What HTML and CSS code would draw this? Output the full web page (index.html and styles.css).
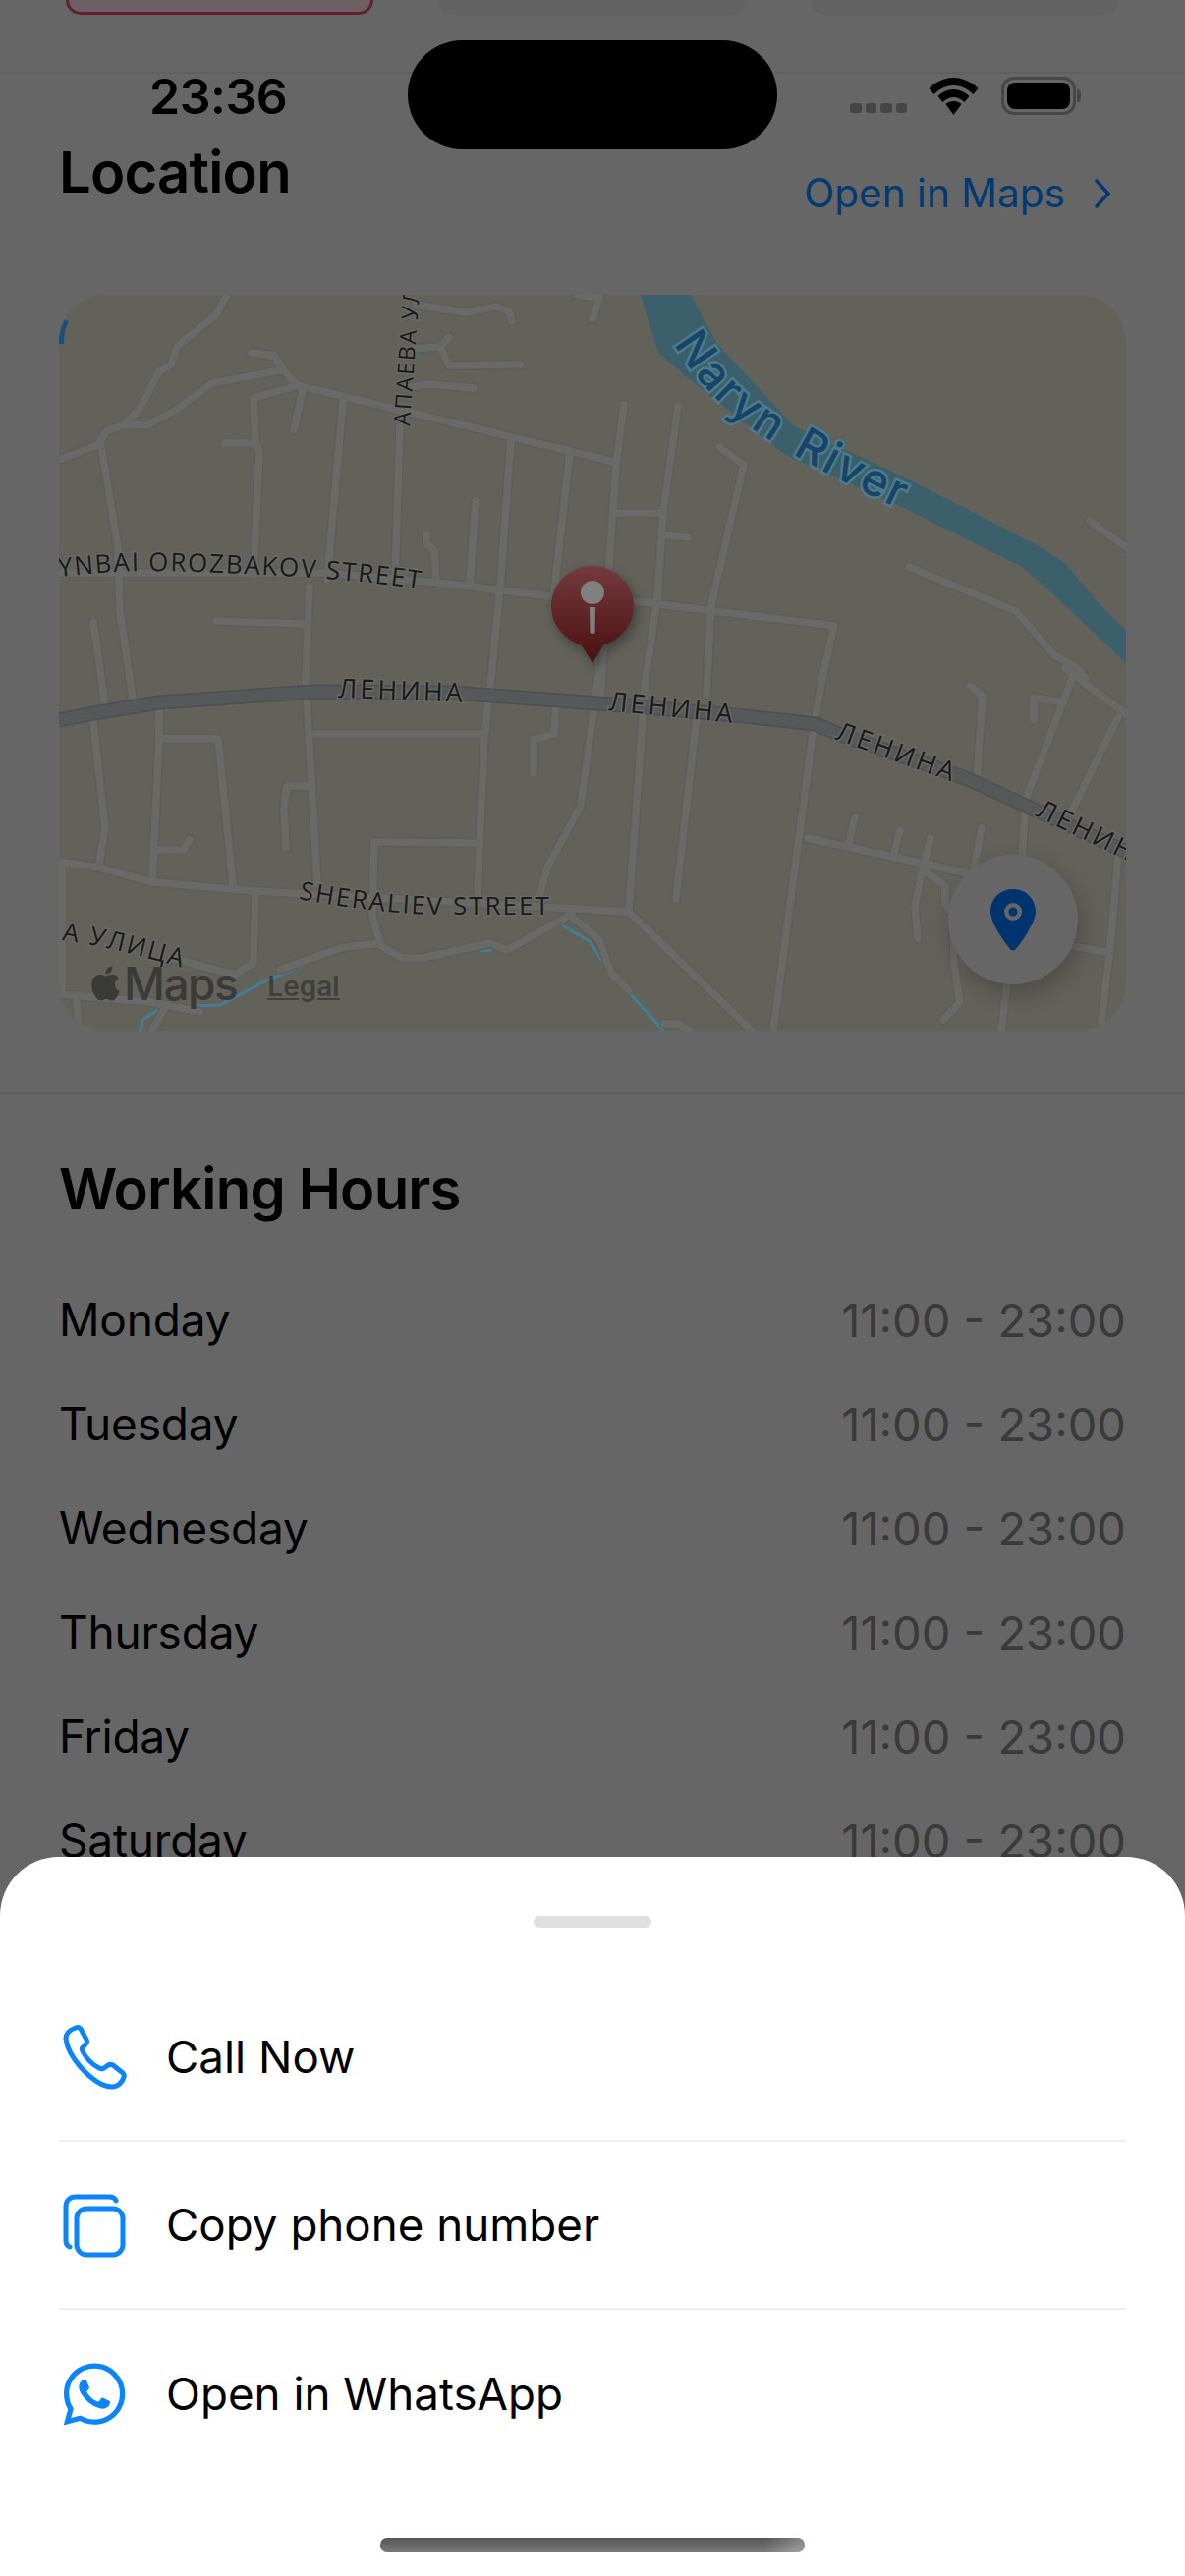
FILE: index.html
```html
<!DOCTYPE html>
<html lang="en">
<head>
<meta charset="utf-8">
<title>Location</title>
<link rel="stylesheet" href="styles.css">
</head>
<body>
<div class="screen">
  <div class="content">
    <div class="chips">
      <div class="chip chip-active"></div>
      <div class="chip"></div>
      <div class="chip"></div>
    </div>

    <section class="location">
      <div class="section-head">
        <h2 class="title">Location</h2>
        <a class="open-maps">Open in Maps
          <svg class="chevron" viewBox="0 0 20 34"><path d="M3 3l13 14L3 31"/></svg>
        </a>
      </div>
      <div class="map">
        <svg class="map-art" viewBox="60 300 1086 749">
          <defs>
            <g id="roads">
              <path d="M231 300L220 320 180 353 174 372 162 378 141 418 128 430"/>
              <path d="M63 467L99 453 109 438 128 432 149 433 178 418 216 390 285 377"/>
              <path d="M256 359L279 362 289 377 302 392 625 470"/>
              <path d="M304 392L258 405 260 450 264 460 258 585"/>
              <path d="M229 451H260"/>
              <path d="M308 397L299 438"/>
              <path d="M349 408L333 590"/>
              <path d="M407 433L402 590"/>
              <path d="M520 447L509 598 501 680 493 752 488 860 486 920"/>
              <path d="M580 460L564 602"/>
              <path d="M635 412L627 473 618 603 611 715"/>
              <path d="M627 522H675"/>
              <path d="M484 510L478 595"/>
              <path d="M434 543V553L442 560 444 592"/>
              <path d="M60 583L330 583 446 593 560 607 646 612 849 637 837 690 828 740 787 1049"/>
              <path d="M103 453L120 557 122 623 132 690 135 713"/>
              <path d="M95 633L103 690 107 720"/>
              <path d="M315 597L311 690 323 900"/>
              <path d="M220 632L311 635"/>
              <path d="M423 310L474 318 505 312 518 317 521 327"/>
              <path d="M419 355L448 353 457 343M448 353L457 372 530 371"/>
              <path d="M417 394L438 391 482 395"/>
              <path d="M587 300L610 303 603 325"/>
              <path d="M690 413L675 520 669 610 657 690 640 925"/>
              <path d="M732 455L757 473 724 615 719 707"/>
              <path d="M709 730L688 915"/>
              <path d="M678 545L700 547"/>
              <path d="M925 577L1034 622 1073 667 1094 678 1105 690"/>
              <path d="M1109 530L1146 557"/>
              <path d="M987 698L1000 708 994 793"/>
              <path d="M1094 683L1044 813 1040 873"/>
              <path d="M1084 680L1146 727"/>
              <path d="M1052 733V710L1082 715"/>
              <path d="M1138 730L1092 823"/>
              <path d="M1138 870L1130 963 1120 1049"/>
              <path d="M822 853L990 890 1025 900"/>
              <path d="M870 832L864 857M916 845L910 868M947 853L940 880M999 843L990 890"/>
              <path d="M939 883L931 923 934 955"/>
              <path d="M939 885L962 902V920L970 932 971 980 977 1020 960 1038"/>
              <path d="M1092 963L1130 970"/>
              <path d="M1025 1000L1019 1049"/>
              <path d="M610 680L591 820 557 883 549 913"/>
              <path d="M566 717L564 747 543 753V787"/>
              <path d="M321 747H493"/>
              <path d="M162 717V750L155 897"/>
              <path d="M162 752H222L237 900"/>
              <path d="M160 865H187L193 855"/>
              <path d="M95 735L107 843 101 878"/>
              <path d="M317 800H292L289 823 291 863"/>
              <path d="M381 857L488 858"/>
              <path d="M381 857L379 933 388 963 409 975H430L499 960 516 967 570 937 582 930"/>
              <path d="M60 877L101 883 155 898 260 907 640 928 765 1049"/>
              <path d="M582 933L610 957 622 990 640 1008"/>
              <path d="M260 910L258 980 239 992 174 975"/>
              <path d="M285 987L346 965 386 960"/>
              <path d="M63 883V1013"/>
              <path d="M60 1012L155 1020 203 1030"/>
              <path d="M168 1025L155 1049"/>
              <path d="M78 1020L80 1049"/>
              <path d="M676 1042L690 1042 702 1049"/>
            </g>
          </defs>
          <rect class="land" x="60" y="300" width="1086" height="749"/>
          <polygon class="river" points="652,300 703,300 715,323 730,350 807,433 929,490 1059,557 1084,573 1117,613 1146,642 1146,675 1067,600 1040,577 912,513 799,463 703,387 670,359"/>
          <path class="creek" d="M143 1049L145 1038 166 1025 224 1023 273 997 308 983M488 968L501 967M572 942L600 958 619 987 640 1010 675 1049"/>
          <path class="creek-dark" d="M62 350C62 338 64 332 67 326"/>
          <use href="#roads" class="road-case"/>
          <use href="#roads" class="road-fill"/>
          <path class="main-case" d="M60 733L101 725 162 715 319 704 461 705 622 717 749 728 830 737 853 747 983 792 1048 822 1146 867"/>
          <path class="main-fill" d="M60 733L101 725 162 715 319 704 461 705 622 717 749 728 830 737 853 747 983 792 1048 822 1146 867"/>
          <path id="p-naryn" class="guide" d="M686 350C700 375 725 405 750 425S830 478 915 518"/>
          <path id="p-orozb" class="guide" d="M60 587C90 584 120 581 150 581S340 585 436 601"/>
          <path id="p-apaeva" class="guide" d="M417 434L427 296"/>
          <path id="p-len1" class="guide" d="M344 710L480 715"/>
          <path id="p-len2" class="guide" d="M619 723L755 737"/>
          <path id="p-len3" class="guide" d="M849 752L980 800"/>
          <path id="p-len4" class="guide" d="M1053 830L1180 892"/>
          <path id="p-sher" class="guide" d="M304 915C330 920 373 928 438 931L570 931"/>
          <path id="p-ul" class="guide" d="M63 957C100 962 140 972 182 984"/>
          <text class="label river-label"><textPath href="#p-naryn">Naryn River</textPath></text>
          <text class="label label-long"><textPath href="#p-orozb">YNBAI OROZBAKOV STREET</textPath></text>
          <text class="label label-small"><textPath href="#p-apaeva">АПАЕВА УЛ</textPath></text>
          <text class="label label-wide"><textPath href="#p-len1">ЛЕНИНА</textPath></text>
          <text class="label label-wide"><textPath href="#p-len2">ЛЕНИНА</textPath></text>
          <text class="label label-wide"><textPath href="#p-len3">ЛЕНИНА</textPath></text>
          <text class="label label-wide"><textPath href="#p-len4">ЛЕНИНА</textPath></text>
          <text class="label"><textPath href="#p-sher">SHERALIEV STREET</textPath></text>
          <text class="label"><textPath href="#p-ul">А УЛИЦА</textPath></text>
        </svg>

        <svg class="map-pin" viewBox="0 0 84 100">
          <defs>
            <linearGradient id="pin-grad" x1="0" y1="0" x2="0" y2="1">
              <stop offset="0" stop-color="#743a3d"/>
              <stop offset="1" stop-color="#4b0f10"/>
            </linearGradient>
          </defs>
          <path fill="url(#pin-grad)" d="M42 0C65 0 84 18 84 41C84 60 70 75 53 81L42 99L31 81C14 75 0 60 0 41C0 18 19 0 42 0Z"/>
          <circle cx="42" cy="27" r="12" fill="#808080"/>
          <path fill="#808080" d="M39 42H45L44.5 68Q42 70 39.5 68Z"/>
        </svg>

        <div class="maps-brand">
          <svg class="apple" viewBox="0 0 24 24"><path d="M12.152 6.896c-.948 0-2.415-1.078-3.96-1.04-2.04.027-3.91 1.183-4.961 3.014-2.117 3.675-.546 9.103 1.519 12.09 1.013 1.454 2.208 3.09 3.792 3.039 1.52-.065 2.09-.987 3.935-.987 1.831 0 2.35.987 3.96.948 1.637-.026 2.676-1.48 3.676-2.948 1.156-1.688 1.636-3.325 1.662-3.415-.039-.013-3.182-1.221-3.22-4.857-.026-3.04 2.48-4.494 2.597-4.559-1.429-2.09-3.623-2.324-4.39-2.376-2-.156-3.675 1.09-4.61 1.09zM15.53 3.83c.843-1.012 1.4-2.427 1.245-3.83-1.207.052-2.662.805-3.532 1.818-.78.896-1.454 2.338-1.273 3.714 1.338.104 2.715-.688 3.559-1.701"/></svg>
          <span class="maps-word">Maps</span>
          <span class="legal">Legal</span>
        </div>

        <div class="locate">
          <svg viewBox="0 0 46 63"><path fill-rule="evenodd" d="M23 0C36 0 46 10 46 23C46 33 33 53 26 61Q23 64 20 61C13 53 0 33 0 23C0 10 10 0 23 0ZM23 14A9 9 0 1 0 23 32A9 9 0 1 0 23 14Z"/><circle cx="23" cy="23" r="4.5"/></svg>
        </div>
      </div>
    </section>

    <section class="hours">
      <h2 class="title">Working Hours</h2>
      <ul class="hour-list">
        <li class="hour-row"><span>Monday</span><span class="time">11:00 - 23:00</span></li>
        <li class="hour-row"><span>Tuesday</span><span class="time">11:00 - 23:00</span></li>
        <li class="hour-row"><span>Wednesday</span><span class="time">11:00 - 23:00</span></li>
        <li class="hour-row"><span>Thursday</span><span class="time">11:00 - 23:00</span></li>
        <li class="hour-row"><span>Friday</span><span class="time">11:00 - 23:00</span></li>
        <li class="hour-row"><span>Saturday</span><span class="time">11:00 - 23:00</span></li>
      </ul>
    </section>
  </div>

  <div class="status">
    <span class="clock">23:36</span>
    <div class="island"></div>
    <div class="status-icons">
      <div class="signal"><i></i><i></i><i></i><i></i></div>
      <svg class="wifi" viewBox="0 0 50 38">
        <path d="M25 0C34 0 43 4 50 11L45 17C39 11 32 8 25 8S11 11 5 17L0 11C7 4 16 0 25 0Z"/>
        <path d="M25 12C31 12 37 15 41 19L36 25C33 22 29 20 25 20S17 22 14 25L9 19C13 15 19 12 25 12Z"/>
        <path d="M25 24C28 24 31 25 33 27L25 38 17 27C19 25 22 24 25 24Z"/>
      </svg>
      <div class="battery"><div class="battery-level"></div></div>
    </div>
  </div>

  <div class="sheet">
    <div class="handle"></div>
    <div class="actions">
      <div class="action">
        <svg class="action-icon stroke" viewBox="0 0 68 68"><path d="M15 4C9 6 5 10 5 15C6 24 12 35 20 44C29 54 41 64 52 64C58 64 63 59 64 54C65 52 64 51 63 50L53 42C51 41 50 41 48 42L44 45C42 46 41 46 39 45C32 42 25 34 22 28C21 26 21 25 22 24L25 21C27 19 27 18 26 16L20 5C18 3 17 3 15 4Z"/></svg>
        <span>Call Now</span>
      </div>
      <div class="action">
        <svg class="action-icon stroke" viewBox="0 0 68 68"><path d="M56 9C55 6 52 5 49 5H15C9 5 5 9 5 15V49C5 52 6 55 9 56"/><rect x="16" y="17" width="47" height="47" rx="10"/></svg>
        <span>Copy phone number</span>
      </div>
      <div class="action">
        <svg class="action-icon fill" viewBox="-1 -1 26 26"><path d="M17.472 14.382c-.297-.149-1.758-.867-2.03-.967-.273-.099-.471-.148-.67.15-.197.297-.767.966-.94 1.164-.173.199-.347.223-.644.075-.297-.15-1.255-.463-2.39-1.475-.883-.788-1.48-1.761-1.653-2.059-.173-.297-.018-.458.13-.606.134-.133.298-.347.446-.52.149-.174.198-.298.298-.497.099-.198.05-.371-.025-.52-.075-.149-.669-1.612-.916-2.207-.242-.579-.487-.5-.669-.51-.173-.008-.371-.01-.57-.01-.198 0-.52.074-.792.372-.272.297-1.04 1.016-1.04 2.479 0 1.462 1.065 2.875 1.213 3.074.149.198 2.096 3.2 5.077 4.487.709.306 1.262.489 1.694.625.712.227 1.36.195 1.871.118.571-.085 1.758-.719 2.006-1.413.248-.694.248-1.289.173-1.413-.074-.124-.272-.198-.57-.347m-5.421 7.403h-.004a9.87 9.87 0 01-5.031-1.378l-.361-.214-3.741.982.998-3.648-.235-.374a9.86 9.86 0 01-1.51-5.26c.001-5.45 4.436-9.884 9.888-9.884 2.64 0 5.122 1.03 6.988 2.898a9.825 9.825 0 012.893 6.994c-.003 5.45-4.437 9.884-9.885 9.884m8.413-18.297A11.815 11.815 0 0012.05 0C5.495 0 .16 5.335.157 11.892c0 2.096.547 4.142 1.588 5.945L.057 24l6.305-1.654a11.882 11.882 0 005.683 1.448h.005c6.554 0 11.89-5.335 11.893-11.893a11.821 11.821 0 00-3.48-8.413z"/></svg>
        <span>Open in WhatsApp</span>
      </div>
    </div>
    <div class="home-indicator"></div>
  </div>
</div>
</body>
</html>
```
FILE: styles.css
```css
* { box-sizing: border-box; }
html, body { margin: 0; padding: 0; }
body { font-family: Inter, "Liberation Sans", sans-serif; color: #000; }

.screen {
  position: relative;
  width: 1206px;
  height: 2622px;
  overflow: hidden;
  background: #666;
}

/* Dimmed page content */
.chips {
  display: flex;
  height: 75px;
  padding: 0 68px 0 67px;
  justify-content: space-between;
  border-bottom: 2px solid #606060;
}
.chip {
  width: 313px;
  height: 15px;
  border-radius: 0 0 24px 24px;
  background: #626262;
}
.chip-active {
  background: #6c6064;
  border: 3px solid #641f2b;
  border-top: 0;
}

.location { padding: 0 60px; }
.section-head {
  display: flex;
  justify-content: space-between;
  align-items: flex-start;
  height: 225px;
  padding-top: 68px;
}
.title {
  margin: 0;
  font-size: 58px;
  line-height: 64px;
  font-weight: 600;
  letter-spacing: -.8px;
  color: #000;
}
.open-maps {
  display: flex;
  align-items: center;
  gap: 28px;
  margin: 29px 14px 0 0;
  font-size: 40.6px;
  line-height: 50px;
  color: #003a74;
}
.chevron {
  width: 20px;
  height: 34px;
  fill: none;
  stroke: #003a74;
  stroke-width: 3.5;
}

.map {
  position: relative;
  width: 1086px;
  height: 749px;
  border-radius: 48px;
  overflow: hidden;
}
.map-art { display: block; width: 1086px; height: 749px; }
.land { fill: #62615a; }
.river { fill: #3c5f6c; }
.creek { fill: none; stroke: #427f94; stroke-width: 3; }
.creek-dark { fill: none; stroke: #1d4f78; stroke-width: 6; }
.road-case, .road-fill { fill: none; stroke-linecap: round; stroke-linejoin: round; }
.road-case { stroke: #5d5d59; stroke-width: 10; }
.road-fill { stroke: #696967; stroke-width: 7.5; }
.main-case, .main-fill { fill: none; stroke-linejoin: round; }
.main-case { stroke: #4e4f50; stroke-width: 15; }
.main-fill { stroke: #57585a; stroke-width: 12; }
.guide { fill: none; stroke: none; }
.label {
  font-family: "Open Sans", Inter, sans-serif;
  font-size: 26px;
  font-weight: 500;
  letter-spacing: 2px;
  fill: #1a1a1a;
  stroke: #696965;
  stroke-width: 3px;
  paint-order: stroke;
}
.label-long { letter-spacing: 1.7px; }
.label-small { font-size: 23px; letter-spacing: 2px; font-weight: 400; }
.label-wide { letter-spacing: 3px; font-size: 27px; }
.river-label {
  font-family: Inter, sans-serif;
  font-size: 46px;
  letter-spacing: 2.5px;
  word-spacing: 6px;
  fill: #174468;
  stroke: #4c7b8a;
  stroke-width: 5px;
}

.map-pin {
  position: absolute;
  left: 501px;
  top: 276px;
  width: 84px;
  height: 100px;
  filter: drop-shadow(3px 5px 6px rgba(0, 0, 0, .35));
}
.maps-brand {
  position: absolute;
  left: 30px;
  top: 676px;
  display: flex;
  align-items: baseline;
  color: #3a3a38;
}
.apple { width: 35px; height: 36px; fill: #3a3a38; align-self: center; margin-right: 1px; }
.maps-word { font-size: 46px; line-height: 50px; font-weight: 500; letter-spacing: -1.5px; }
.legal {
  align-self: flex-start;
  margin: 11px 0 0 31px;
  font-size: 28px;
  font-weight: 600;
  text-decoration: underline;
  color: #403f3c;
}
.locate {
  position: absolute;
  left: 905px;
  top: 570px;
  width: 132px;
  height: 132px;
  border-radius: 50%;
  background: #666;
  box-shadow: 4px 10px 24px rgba(0, 0, 0, .22);
  display: flex;
  align-items: center;
  justify-content: center;
}
.locate svg { width: 46px; height: 63px; fill: #00346f; }

.hours {
  margin-top: 63px;
  padding: 64px 60px 0;
  border-top: 2px solid #5f5f5f;
}
.hour-list { list-style: none; margin: 48px 0 0; padding: 0; }
.hour-row {
  display: flex;
  justify-content: space-between;
  align-items: center;
  height: 106px;
  font-size: 46px;
  letter-spacing: -.2px;
  color: #000;
}
.time { color: #3a3a3a; font-size: 47px; letter-spacing: 0; }

/* Status bar */
.status {
  position: absolute;
  left: 0;
  top: 0;
  width: 100%;
  height: 160px;
  pointer-events: none;
}
.clock {
  position: absolute;
  left: 152px;
  top: 68px;
  font-size: 50px;
  line-height: 60px;
  font-weight: 600;
  letter-spacing: -.5px;
}
.island {
  position: absolute;
  left: 415px;
  top: 41px;
  width: 376px;
  height: 111px;
  border-radius: 56px;
  background: #000;
}
.status-icons {
  position: absolute;
  left: 865px;
  top: 78px;
  display: flex;
  align-items: flex-end;
}
.signal { display: flex; gap: 4px; margin: 0 22px 2px 0; }
.signal i { display: block; width: 11.5px; height: 10px; border-radius: 3px; background: #454545; }
.wifi { width: 51px; height: 38px; fill: #000; margin-right: 23px; }
.battery {
  position: relative;
  width: 76px;
  height: 39px;
  border: 3px solid #474747;
  border-radius: 13px;
  padding: 3px;
}
.battery::after {
  content: "";
  position: absolute;
  right: -8px;
  top: 10px;
  width: 4px;
  height: 13px;
  border-radius: 0 4px 4px 0;
  background: #474747;
}
.battery-level { width: 100%; height: 100%; border-radius: 8px; background: #000; }

/* Bottom sheet */
.sheet {
  position: absolute;
  left: 0;
  bottom: 0;
  width: 100%;
  height: 732px;
  background: #fff;
  border-radius: 60px 60px 0 0;
  padding: 60px 60px 0;
}
.handle {
  width: 120px;
  height: 12px;
  margin: 0 auto 47px;
  border-radius: 6px;
  background: #e0e0e0;
}
.action {
  display: flex;
  align-items: center;
  height: 171px;
  gap: 39px;
  font-size: 45.7px;
  color: #000;
  border-bottom: 2px solid #eeeeee;
}
.action:last-child { border-bottom: 0; }
.action-icon { width: 68px; height: 68px; flex: none; margin-left: 2px; }
.stroke { fill: none; stroke: #0a84ff; stroke-width: 5; stroke-linejoin: round; stroke-linecap: round; }
.fill { fill: #0a84ff; }
.home-indicator {
  position: absolute;
  left: 387px;
  top: 693px;
  width: 432px;
  height: 15px;
  border-radius: 7px;
  background: linear-gradient(100deg, transparent 90%, rgba(255, 255, 255, .3)), linear-gradient(#555, #7a7a7a);
}
```
